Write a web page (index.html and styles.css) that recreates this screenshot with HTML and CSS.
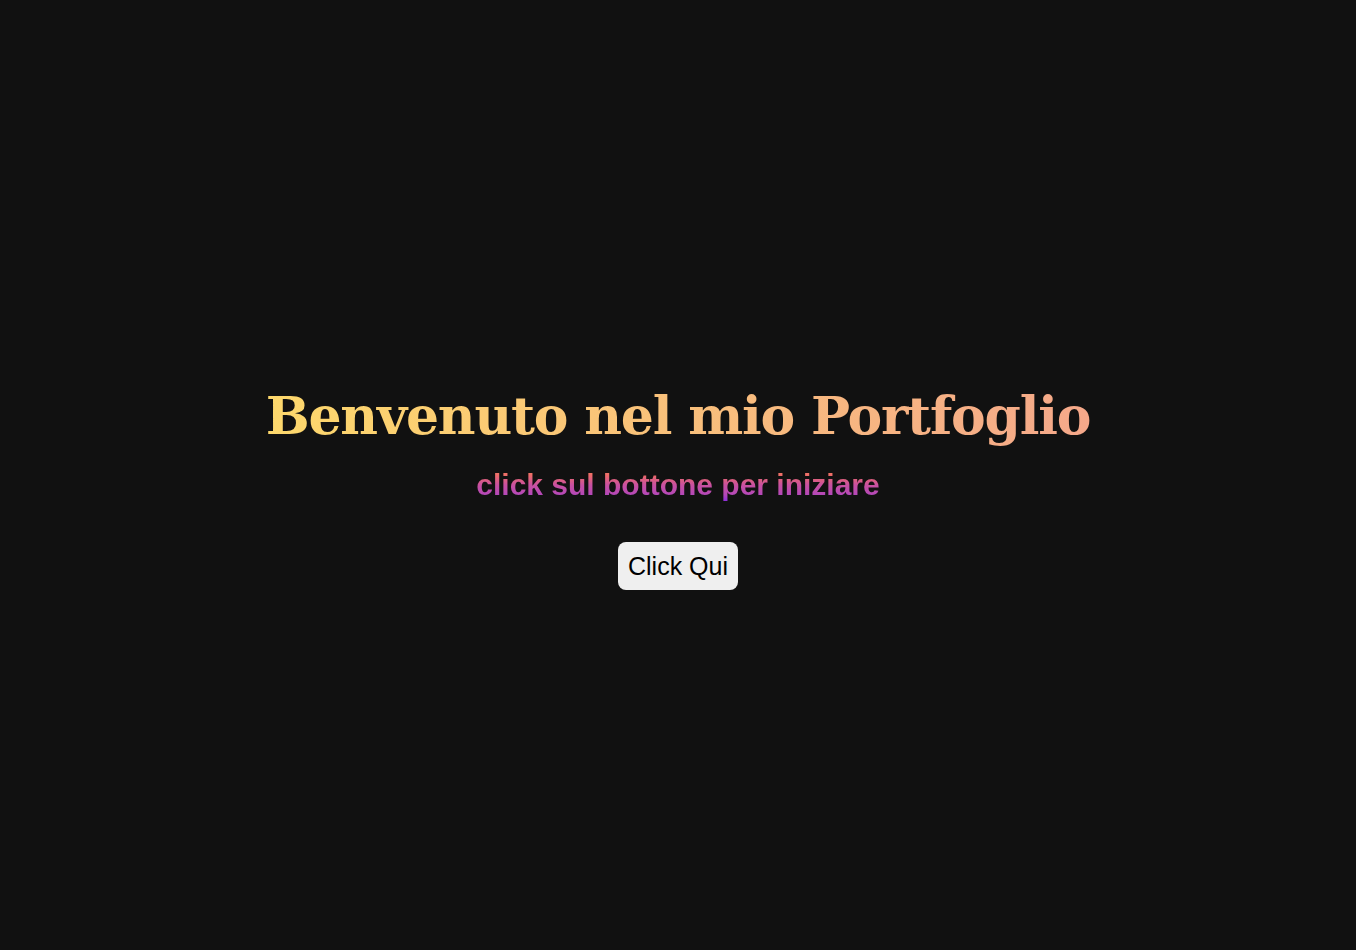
FILE: index.html
```html
<!DOCTYPE html>
<html lang="it">
<head>
<meta charset="utf-8">
<title>Portfoglio</title>
<link rel="stylesheet" href="styles.css">
</head>
<body>
<main class="hero">
  <h1 class="title">Benvenuto nel mio Portfoglio</h1>
  <h2 class="subtitle">click sul bottone per iniziare</h2>
  <button class="cta" type="button">Click Qui</button>
</main>
</body>
</html>
```
FILE: styles.css
```css
html, body {
  margin: 0;
  padding: 0;
  background: #111111;
}
.hero {
  box-sizing: border-box;
  min-height: 100vh;
  padding-top: 26px;
  display: flex;
  flex-direction: column;
  align-items: center;
  justify-content: center;
  text-align: center;
}
.title {
  margin: 0;
  font-family: "DejaVu Serif", serif;
  font-weight: bold;
  font-size: 52px;
  line-height: 60px;
  letter-spacing: -1.2px;
  background: linear-gradient(90deg, #fdd86c 0%, #f5a88a 100%);
  -webkit-background-clip: text;
  background-clip: text;
  color: transparent;
}
.subtitle {
  margin: 22px 0 0;
  font-family: "Liberation Sans", Arial, sans-serif;
  font-weight: bold;
  font-size: 30px;
  line-height: 34px;
  background: linear-gradient(180deg, #f58a5a 0%, #ec6a6a 22%, #c850a0 50%, #b448b8 78%, #8a2be2 100%);
  -webkit-background-clip: text;
  background-clip: text;
  color: transparent;
}
.cta {
  margin-top: 40px;
  font-family: "Liberation Sans", Arial, sans-serif;
  font-size: 25px;
  line-height: 28px;
  padding: 10px 10px;
  border: none;
  border-radius: 8px;
  background: #efefef;
  color: #000;
}
```
